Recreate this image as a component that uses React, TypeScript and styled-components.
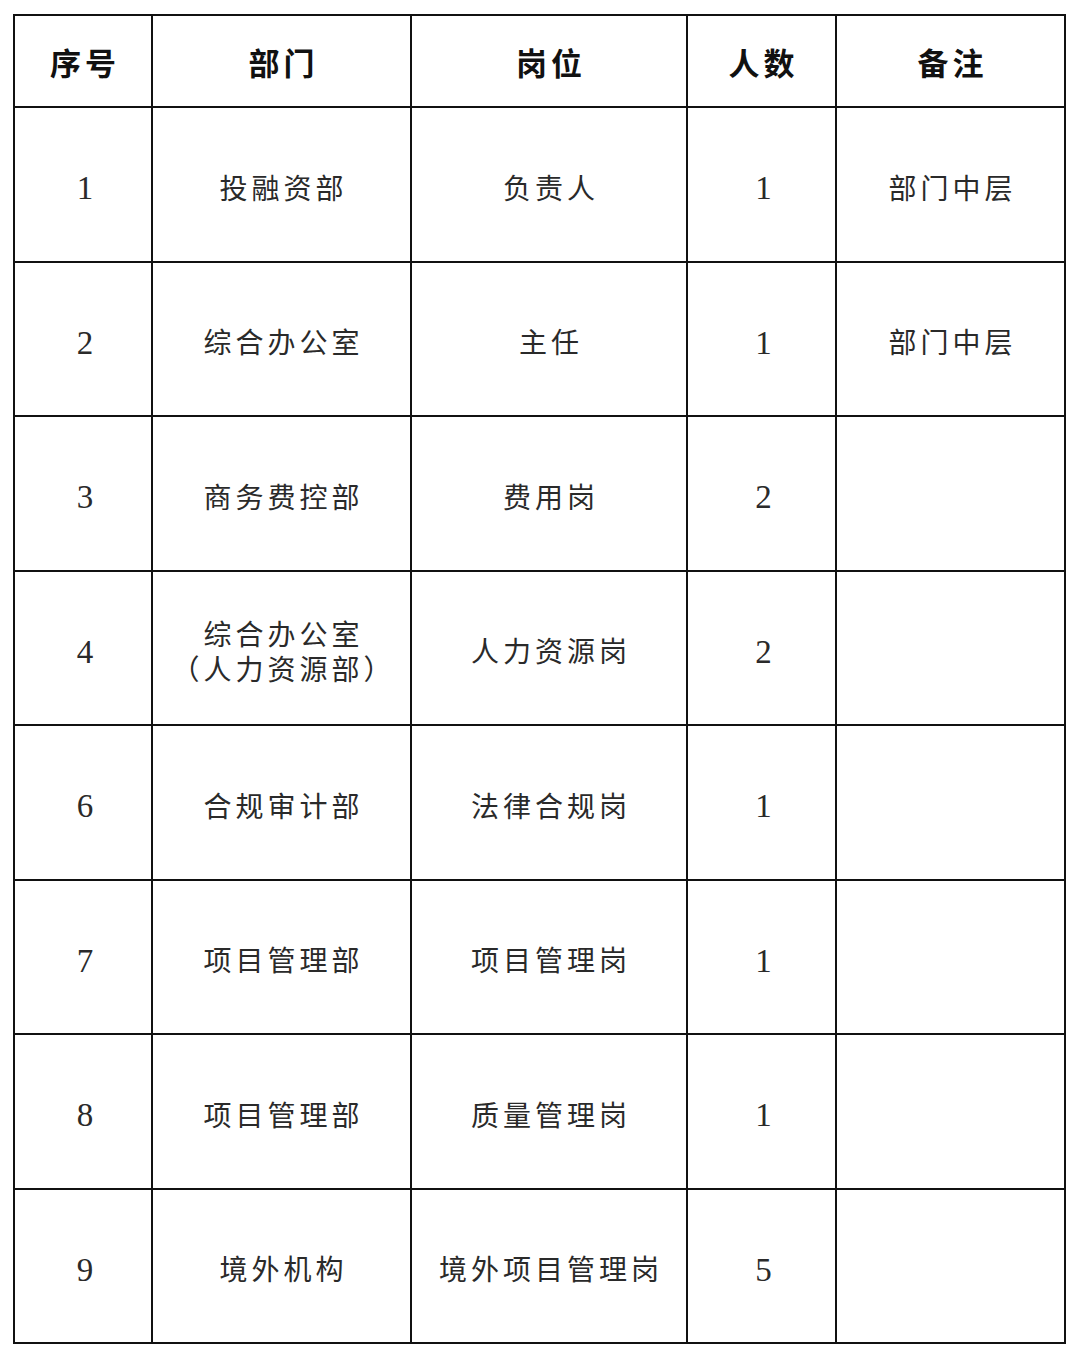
import React from "react";
import styled, { createGlobalStyle } from "styled-components";

const Global = createGlobalStyle`
  html, body { margin: 0; padding: 0; background: #fff; }
  body { font-family: "Liberation Serif", "Noto Sans CJK SC", serif; color: #1c1c1c; }
`;

const Page = styled.div`
  width: 1080px;
  height: 1359px;
  box-sizing: border-box;
  padding: 14px 0 0 13px;
  background: #fff;
`;

const Table = styled.table`
  border-collapse: collapse;
  table-layout: fixed;
  width: 1053px;
`;

const Cell = styled.td<{ $head?: boolean }>`
  border: 2px solid #111;
  padding: ${(p) => (p.$head ? "7px 0 0 4px" : "9px 0 0 4px")};
  text-align: center;
  vertical-align: middle;
  font-size: ${(p) => (p.$head ? "31px" : "28px")};
  font-weight: ${(p) => (p.$head ? 700 : 400)};
  letter-spacing: 4px;
  line-height: 35px;
  color: ${(p) => (p.$head ? "#111" : "#2a2a2a")};
`;

const Num = styled.span`
  font-family: "Liberation Serif", serif;
  font-size: 33px;
  letter-spacing: 0;
`;

const Row = styled.tr<{ $h: number }>`
  height: ${(p) => p.$h}px;
`;

const cols = [138, 259, 276, 149, 229];

const rows: [string, string[], string, string, string][] = [
  ["1", ["投融资部"], "负责人", "1", "部门中层"],
  ["2", ["综合办公室"], "主任", "1", "部门中层"],
  ["3", ["商务费控部"], "费用岗", "2", ""],
  ["4", ["综合办公室", "（人力资源部）"], "人力资源岗", "2", ""],
  ["6", ["合规审计部"], "法律合规岗", "1", ""],
  ["7", ["项目管理部"], "项目管理岗", "1", ""],
  ["8", ["项目管理部"], "质量管理岗", "1", ""],
  ["9", ["境外机构"], "境外项目管理岗", "5", ""],
];

const heights = [155, 154, 155, 154, 155, 154, 155, 154];

export default function App() {
  return (
    <Page>
      <Global />
      <Table>
        <colgroup>
          {cols.map((w, i) => (
            <col key={i} style={{ width: w }} />
          ))}
        </colgroup>
        <tbody>
          <Row $h={92}>
            {["序号", "部门", "岗位", "人数", "备注"].map((h) => (
              <Cell as="th" $head key={h}>
                {h}
              </Cell>
            ))}
          </Row>
          {rows.map((r, i) => (
            <Row $h={heights[i]} key={i}>
              <Cell>
                <Num>{r[0]}</Num>
              </Cell>
              <Cell>
                {r[1].map((l, j) => (
                  <div key={j}>{l}</div>
                ))}
              </Cell>
              <Cell>{r[2]}</Cell>
              <Cell>
                <Num>{r[3]}</Num>
              </Cell>
              <Cell>{r[4]}</Cell>
            </Row>
          ))}
        </tbody>
      </Table>
    </Page>
  );
}
